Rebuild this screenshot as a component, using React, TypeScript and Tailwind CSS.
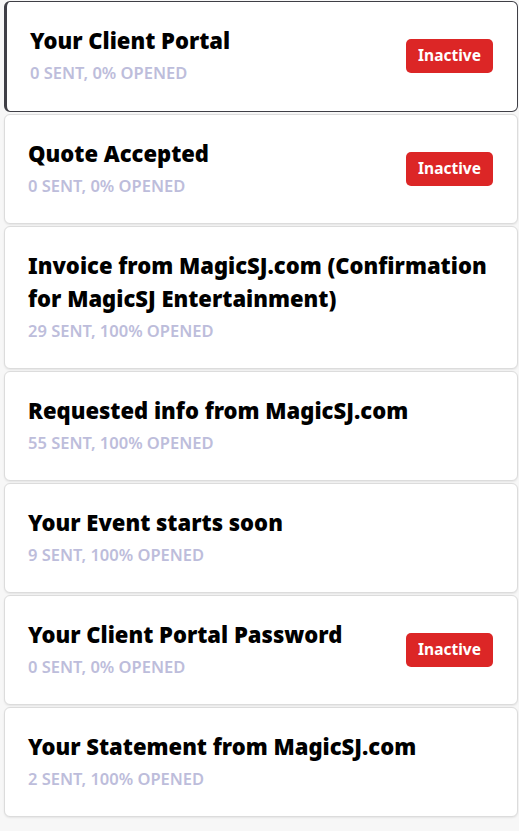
const items = [
  { title: "Your Client Portal", stats: "0 SENT, 0% OPENED", inactive: true, selected: true },
  { title: "Quote Accepted", stats: "0 SENT, 0% OPENED", inactive: true },
  {
    title: "Invoice from MagicSJ.com (Confirmation for MagicSJ Entertainment)",
    stats: "29 SENT, 100% OPENED",
  },
  { title: "Requested info from MagicSJ.com", stats: "55 SENT, 100% OPENED" },
  { title: "Your Event starts soon", stats: "9 SENT, 100% OPENED" },
  { title: "Your Client Portal Password", stats: "0 SENT, 0% OPENED", inactive: true },
  { title: "Your Statement from MagicSJ.com", stats: "2 SENT, 100% OPENED" },
];

function TemplateCard({
  title,
  stats,
  inactive,
  selected,
}: {
  title: string;
  stats: string;
  inactive?: boolean;
  selected?: boolean;
}) {
  return (
    <div
      className={
        selected
          ? "flex items-center justify-between gap-3 rounded-md border border-l-[3px] border-[#3f3f46] bg-white pb-[27px] pl-[23px] pr-6 pt-[22px]"
          : "flex items-center justify-between gap-3 rounded-md border border-[#dcdcdc] bg-white pb-[26px] pl-[23px] pr-6 pt-[22px] shadow-[0_1px_2px_rgba(0,0,0,0.08)]"
      }
    >
      <div className="min-w-0">
        <h3 className="text-[22px] font-black leading-[33px] text-black">{title}</h3>
        <p className="mt-[5px] text-[16.5px] font-semibold leading-[22px] text-[#bdbddb]">{stats}</p>
      </div>
      {inactive && (
        <span className="mt-[4px] flex h-[34px] w-[87px] shrink-0 items-center justify-center rounded-[5px] bg-[#dc2626] text-[15.5px] font-bold text-white">
          Inactive
        </span>
      )}
    </div>
  );
}

export default function App() {
  return (
    <main
      className="min-h-screen bg-[#f7f7f7] pb-4 pl-1 pr-px pt-px"
      style={{ fontFamily: '"Noto Sans", "Open Sans", sans-serif' }}
    >
      <div className="flex flex-col gap-[2px]">
        {items.map((item) => (
          <TemplateCard key={item.title} {...item} />
        ))}
      </div>
    </main>
  );
}
